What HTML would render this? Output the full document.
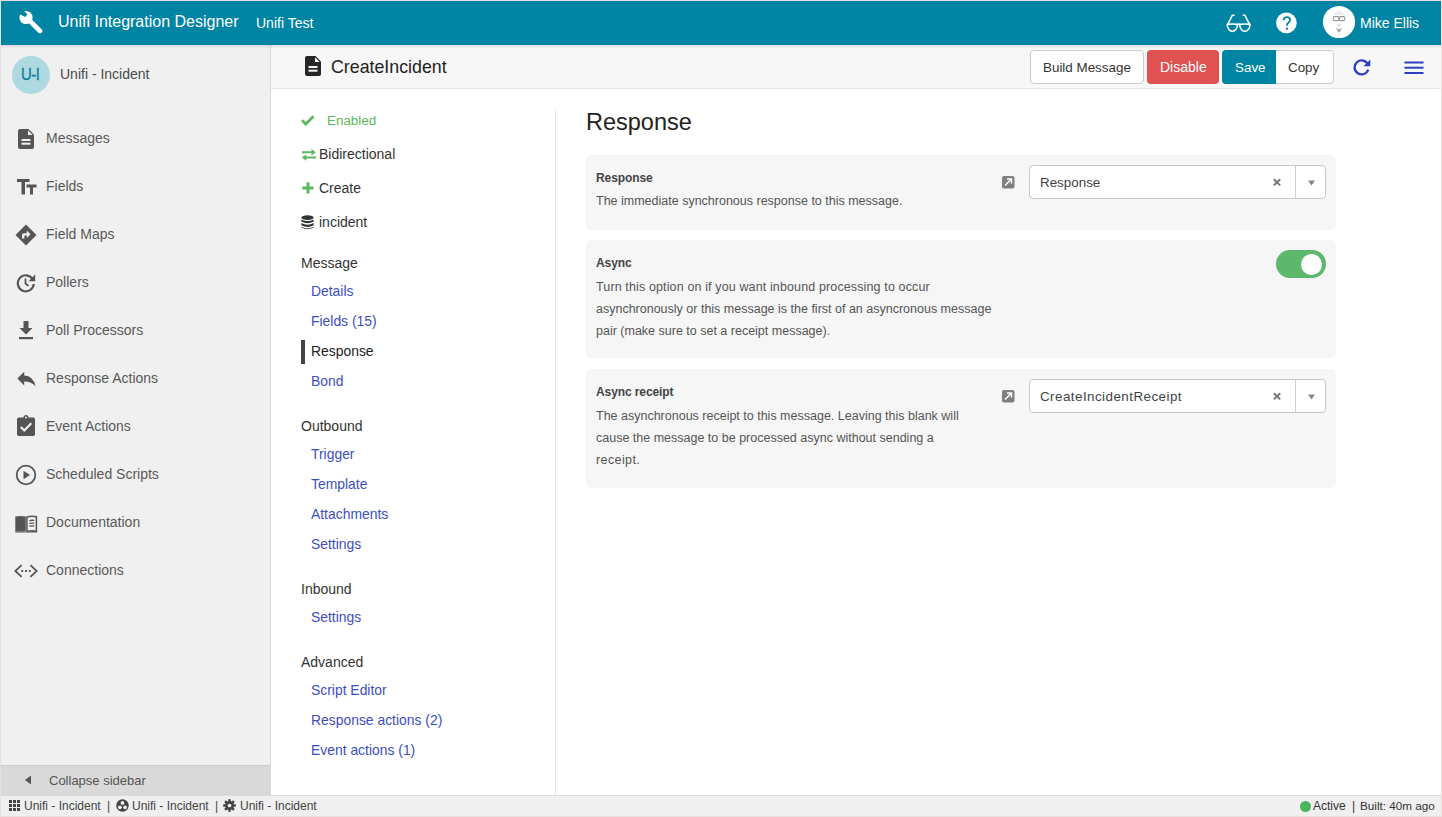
<!DOCTYPE html>
<html><head><meta charset="utf-8">
<style>
*{box-sizing:border-box;margin:0;padding:0}
html,body{width:1442px;height:817px;overflow:hidden;background:#e8e4e2;font-family:"Liberation Sans",sans-serif}
#frame{position:absolute;left:0;top:0;width:1442px;height:817px;background:#fff;overflow:hidden}
.a{position:absolute}
.t{position:absolute;line-height:1;white-space:nowrap}
svg{position:absolute;display:block}
#hdr{position:absolute;left:1px;top:1px;width:1440px;height:44px;background:#0084a4}
#side{position:absolute;left:1px;top:45px;width:270px;height:750px;background:#f0f0f0;border-right:1px solid #dadada}
#bar{position:absolute;left:271px;top:45px;width:1170px;height:44px;background:#f7f7f7;border-bottom:1px solid #e6e6e6}
#foot{position:absolute;left:1px;top:795px;width:1440px;height:21px;background:#efefef;border-top:1px solid #dcdcdc}
.nav{color:#595959;font-size:14px}
.sub{color:#3d4ec2;font-size:13.9px}
.hd{color:#333;font-size:14px}
.card{position:absolute;left:585px;width:750px;background:#f6f6f6;border-radius:5px}
.lbl{color:#444;font-size:12px;font-weight:bold;letter-spacing:-0.1px}
.dsc{color:#555;font-size:12.5px}
.sel{position:absolute;left:1028px;width:297px;height:34px;background:#fff;border:1px solid #c8c8c8;border-radius:4px}
.ft{top:calc(810px - .8465em);font-size:12px;color:#444}
.btn{position:absolute;top:50px;height:34px;border-radius:4px}
</style></head><body>
<div id="frame">
<!-- HEADER -->
<div id="hdr"></div>
  <svg style="left:18px;top:10px" width="25" height="24" viewBox="0 0 25 24">
    <path d="M11 10 L22 21" stroke="#fff" stroke-width="4.6" stroke-linecap="round"/>
    <circle cx="8" cy="7.5" r="6.6" fill="#fff"/>
    <path d="M0.5 3.5 L4.5 -0.5 L9.5 4.5 L7 7 Z" fill="#0084a4"/>
  </svg>
  <div class="t" style="left:58px;top:calc(28px - .8465em);font-size:16px;color:#fff">Unifi Integration Designer</div>
  <div class="t" style="left:256px;top:calc(28px - .8465em);font-size:14px;color:#fff">Unifi Test</div>
  <!-- glasses -->
  <svg style="left:1224px;top:12px" width="28" height="22" viewBox="0 0 28 22">
    <g fill="none" stroke="#fff" stroke-width="1.6" stroke-linejoin="round">
      <path d="M10.6 3.2H8.4L3.6 12.6"/><path d="M18.6 3.2H20.8L25.6 12.6"/>
      <path d="M3.2 12.4Q8.35 11.6 13.5 12.4A5.15 7 0 0 1 3.2 12.4Z"/>
      <path d="M15.7 12.4Q20.85 11.6 26 12.4A5.15 7 0 0 1 15.7 12.4Z"/>
      <path d="M13.5 12.4Q14.6 11.6 15.7 12.4"/>
    </g>
  </svg>
  <!-- question -->
  <svg style="left:1275px;top:12px" width="22" height="22" viewBox="0 0 22 22">
    <circle cx="11.4" cy="10.9" r="10.3" fill="#fff"/>
    <path d="M8.6 8.2Q8.7 5 12 5Q15.1 5 15.1 7.8Q15.1 9.5 13.3 10.7Q11.9 11.6 11.9 13.8" fill="none" stroke="#0084a4" stroke-width="1.75"/>
    <rect x="10.9" y="15.6" width="2" height="2.1" fill="#0084a4"/>
  </svg>
  <!-- avatar -->
  <svg style="left:1322px;top:5px" width="34" height="34" viewBox="0 0 34 34">
    <circle cx="17" cy="17" r="16.1" fill="#fff"/>
    <path d="M11.2 10.3Q17 0.8 22.8 10.3Z" fill="#ececec"/>
    <rect x="11.3" y="11.6" width="5.4" height="4" rx="1" fill="none" stroke="#999" stroke-width="1.1"/>
    <rect x="17.3" y="11.6" width="5.4" height="4" rx="1" fill="none" stroke="#999" stroke-width="1.1"/>
    <path d="M14.8 19.8Q17 19 19.2 19.8L18.2 21H15.8Z" fill="#d0d0d0"/>
    <path d="M13.8 22.8Q17 25.5 20.2 22.8L17.9 27.3H16.1Z" fill="#a8a8a8"/>
    <path d="M16 27.5L17 32L18 27.5Z" fill="#f0f0f0"/>
  </svg>
  <div class="t" style="left:1360px;top:calc(27.5px - .8465em);font-size:14px;color:#fff">Mike Ellis</div>

<!-- SIDEBAR -->
<div id="side"></div>
<div class="a" style="left:12px;top:56px;width:38px;height:38px;border-radius:50%;background:#aed9e1"></div>
<div class="t" style="left:21px;top:calc(80.5px - .8465em);font-size:16px;color:#0f7f9c;letter-spacing:-0.5px;transform:scaleX(0.93);transform-origin:0 0;-webkit-text-stroke:0.3px #0f7f9c">U-I</div>
<div class="t nav" style="left:60px;top:calc(78.5px - .8465em);color:#4a4a4a">Unifi - Incident</div>

<!-- nav icons -->
<svg style="left:18px;top:129px" width="16" height="20" viewBox="0 0 16 20">
  <path d="M2 0H10.5L16 5.5V18A2 2 0 0 1 14 20H2A2 2 0 0 1 0 18V2A2 2 0 0 1 2 0Z" fill="#555"/>
  <path d="M10 1.3L14.7 6H10Z" fill="#f0f0f0"/>
  <rect x="3.5" y="10" width="9" height="2" fill="#f0f0f0"/><rect x="3.5" y="13.7" width="9" height="2" fill="#f0f0f0"/>
</svg>
<div class="t nav" style="left:46px;top:calc(142.5px - .8465em)">Messages</div>

<svg style="left:16.5px;top:178.7px" width="20" height="16" viewBox="0 0 20 16">
  <path d="M0 0H12.5V3H8V15.5H4.5V3H0Z" fill="#555"/>
  <path d="M9.5 5.5H19.5V8.5H16V15.5H13V8.5H9.5Z" fill="#555"/>
</svg>
<div class="t nav" style="left:46px;top:calc(190.5px - .8465em)">Fields</div>

<svg style="left:15px;top:224px" width="22" height="22" viewBox="0 0 22 22">
  <path d="M11 0.5L21.5 11L11 21.5L0.5 11Z" fill="#555"/>
  <path d="M7 14.5V11.2Q7 9.2 9 9.2H11.8V6.6L15.6 10.3L11.8 14V11.6H9.4V14.5Z" fill="#f0f0f0"/>
</svg>
<div class="t nav" style="left:46px;top:calc(238.5px - .8465em)">Field Maps</div>

<svg style="left:16px;top:273px" width="20" height="20" viewBox="0 0 20 20">
  <path d="M16.6 6 A8 8 0 1 0 17.8 11" fill="none" stroke="#555" stroke-width="2.2"/>
  <path d="M19.2 1.5V8.2H12.5Z" fill="#555"/>
  <path d="M9.5 5.5V10.5L12.5 13" fill="none" stroke="#555" stroke-width="1.8"/>
</svg>
<div class="t nav" style="left:46px;top:calc(286.5px - .8465em)">Pollers</div>

<svg style="left:18px;top:321px" width="16" height="19" viewBox="0 0 16 19">
  <path d="M5.5 0H10.5V7H14.5L8 13.5L1.5 7H5.5Z" fill="#555"/>
  <rect x="1" y="16" width="14" height="2.2" fill="#555"/>
</svg>
<div class="t nav" style="left:46px;top:calc(334.5px - .8465em)">Poll Processors</div>

<svg style="left:17px;top:371px" width="19" height="16" viewBox="0 0 19 16">
  <path d="M0.3 7.6L7.2 0.8V4.6Q16.5 5 18.6 15.4Q14.5 10.4 7.2 10.4V14.4Z" fill="#555"/>
</svg>
<div class="t nav" style="left:46px;top:calc(382.5px - .8465em)">Response Actions</div>

<svg style="left:17px;top:415px" width="18" height="21" viewBox="0 0 18 21">
  <rect x="0" y="2.5" width="18" height="18.5" rx="1.8" fill="#555"/>
  <circle cx="9" cy="2.5" r="2.5" fill="#555"/><circle cx="9" cy="2.6" r="1" fill="#f0f0f0"/>
  <path d="M3.8 12L7.3 15.5L14.3 8.3" fill="none" stroke="#f0f0f0" stroke-width="2.2"/>
</svg>
<div class="t nav" style="left:46px;top:calc(430.5px - .8465em)">Event Actions</div>

<svg style="left:15px;top:464px" width="22" height="22" viewBox="0 0 22 22">
  <circle cx="11" cy="11" r="9.3" fill="none" stroke="#555" stroke-width="1.8"/>
  <path d="M8.5 6.8L15 11L8.5 15.2Z" fill="#555"/>
</svg>
<div class="t nav" style="left:46px;top:calc(478.5px - .8465em)">Scheduled Scripts</div>

<svg style="left:15px;top:515px" width="23" height="18" viewBox="0 0 23 18">
  <path d="M0.3 1.6Q5.5 0.2 10.8 1.6V16.8Q5.5 15.6 0.3 16.8Z" fill="#555"/>
  <path d="M11.9 2Q16.8 0.6 21.4 1.8V16.2Q16.8 15.2 11.9 16.4Z" fill="none" stroke="#555" stroke-width="1.5"/>
  <path d="M14.3 5.6Q17 5 19.2 5.4M14.3 8.4Q17 7.8 19.2 8.2M14.3 11.2Q17 10.6 19.2 11" fill="none" stroke="#555" stroke-width="1.3"/>
  <path d="M0.3 16.8Q5.5 15.6 11.3 17.3Q16.8 15.6 22.1 16.8V17.6H0.3Z" fill="#555"/>
</svg>
<div class="t nav" style="left:46px;top:calc(526.5px - .8465em)">Documentation</div>

<svg style="left:14px;top:564px" width="24" height="14" viewBox="0 0 24 14">
  <path d="M7.6 1.2L1.3 7L7.6 12.8M16.4 1.2L22.7 7L16.4 12.8" fill="none" stroke="#555" stroke-width="1.8"/>
  <rect x="7.3" y="6" width="1.9" height="2" fill="#555"/><rect x="11.1" y="6" width="1.9" height="2" fill="#555"/><rect x="14.9" y="6" width="1.9" height="2" fill="#555"/>
</svg>
<div class="t nav" style="left:46px;top:calc(574.5px - .8465em)">Connections</div>

<!-- collapse -->
<div class="a" style="left:1px;top:765px;width:269px;height:30px;background:#d9d9d9;border-top:1px solid #cdcdcd"></div>
<svg style="left:24px;top:775px" width="8" height="10" viewBox="0 0 8 10"><path d="M7 0.5V9.5L1 5Z" fill="#555"/></svg>
<div class="t" style="left:49px;top:calc(785px - .8465em);font-size:13px;color:#555">Collapse sidebar</div>

<!-- CONTENT BAR -->
<div id="bar"></div>
<div class="a" style="left:1px;top:45px;width:1440px;height:4px;background:linear-gradient(rgba(0,0,0,.09),rgba(0,0,0,0))"></div>
<svg style="left:305px;top:56px" width="16" height="20" viewBox="0 0 16 20">
  <path d="M2 0H10.5L16 5.5V18A2 2 0 0 1 14 20H2A2 2 0 0 1 0 18V2A2 2 0 0 1 2 0Z" fill="#262626"/>
  <path d="M10 1.3L14.7 6H10Z" fill="#f7f7f7"/>
  <rect x="3.5" y="10" width="9" height="2" fill="#f7f7f7"/><rect x="3.5" y="13.7" width="9" height="2" fill="#f7f7f7"/>
</svg>
<div class="t" style="left:331px;top:calc(74px - .8465em);font-size:17.8px;color:#222">CreateIncident</div>

<div class="btn" style="left:1030px;width:114px;background:#fff;border:1px solid #cacaca"></div>
<div class="t" style="left:1043px;top:calc(72px - .8465em);font-size:13.4px;color:#333">Build Message</div>
<div class="btn" style="left:1147px;width:72px;background:#e05151"></div>
<div class="t" style="left:1160px;top:calc(72px - .8465em);font-size:14px;color:#fff">Disable</div>
<div class="btn" style="left:1222px;width:112px;background:#fff;border:1px solid #cacaca"></div>
<div class="btn" style="left:1222px;width:54px;background:#0084a4;border-radius:4px 0 0 4px"></div>
<div class="t" style="left:1235px;top:calc(72px - .8465em);font-size:13.4px;color:#fff">Save</div>
<div class="t" style="left:1288px;top:calc(72px - .8465em);font-size:13.4px;color:#333">Copy</div>
<svg style="left:1352px;top:58px" width="20" height="18" viewBox="0 0 20 18">
  <path d="M16 6.5A7 7 0 1 0 16.3 11.5" fill="none" stroke="#2e3fc4" stroke-width="2.3"/>
  <path d="M18.3 1.5V8.3H11.5Z" fill="#2e3fc4"/>
</svg>
<svg style="left:1404px;top:60.5px" width="20" height="14" viewBox="0 0 20 14">
  <rect x="0.5" y="0.5" width="19" height="2" fill="#2e3fc4"/><rect x="0.5" y="5.7" width="19" height="2" fill="#2e3fc4"/><rect x="0.5" y="11" width="19" height="2" fill="#2e3fc4"/>
</svg>

<!-- SUBNAV -->
<div class="a" style="left:1px;top:1px;width:1441px;height:816px">
<svg style="left:300px;top:113.5px" width="14" height="11" viewBox="0 0 14 11">
  <path d="M1 5.3L4.8 9L12.5 1.3" fill="none" stroke="#5cb85c" stroke-width="2.7"/>
</svg>
<div class="t" style="left:326px;top:calc(124px - .8465em);font-size:13.4px;color:#5cb85c">Enabled</div>
<svg style="left:299.5px;top:147.5px" width="16" height="12" viewBox="0 0 16 12">
  <path d="M1 3.2H12M3.5 8.6H15" stroke="#5cb85c" stroke-width="2"/>
  <path d="M10.5 0L14.8 3.2L10.5 6.4Z M5.2 5.4L0.8 8.6L5.2 11.8Z" fill="#5cb85c"/>
</svg>
<div class="t hd" style="left:318px;top:calc(158px - .8465em)">Bidirectional</div>
<svg style="left:300.5px;top:181px" width="12" height="12" viewBox="0 0 12 12">
  <path d="M4.5 0.2H7.5V4.5H11.5V7.5H7.5V11.5H4.5V7.5H0.3V4.5H4.5Z" fill="#5cb85c"/>
</svg>
<div class="t hd" style="left:318px;top:calc(192px - .8465em)">Create</div>
<svg style="left:299.5px;top:213.5px" width="13" height="15" viewBox="0 0 13 15">
  <ellipse cx="6.5" cy="2.6" rx="6.2" ry="2.4" fill="#333"/>
  <path d="M0.3 4.4Q6.5 7.8 12.7 4.4V6.6Q6.5 10 0.3 6.6Z" fill="#333"/>
  <path d="M0.3 8.1Q6.5 11.5 12.7 8.1V10.3Q6.5 13.7 0.3 10.3Z" fill="#333"/>
  <path d="M0.3 11.7Q6.5 15.1 12.7 11.7V12.5Q6.5 15.9 0.3 12.5Z" fill="#333"/>
</svg>
<div class="t hd" style="left:318px;top:calc(226px - .8465em)">incident</div>

<div class="t hd" style="left:300px;top:calc(267px - .8465em)">Message</div>
<div class="t sub" style="left:310px;top:calc(295.5px - .8465em)">Details</div>
<div class="t sub" style="left:310px;top:calc(325.5px - .8465em)">Fields (15)</div>
<div class="a" style="left:300px;top:339px;width:4px;height:24px;background:#444"></div>
<div class="t sub" style="left:310px;top:calc(355.5px - .8465em);color:#222">Response</div>
<div class="t sub" style="left:310px;top:calc(385.5px - .8465em)">Bond</div>

<div class="t hd" style="left:300px;top:calc(429.5px - .8465em)">Outbound</div>
<div class="t sub" style="left:310px;top:calc(458.5px - .8465em)">Trigger</div>
<div class="t sub" style="left:310px;top:calc(488.5px - .8465em)">Template</div>
<div class="t sub" style="left:310px;top:calc(518.5px - .8465em)">Attachments</div>
<div class="t sub" style="left:310px;top:calc(548.5px - .8465em)">Settings</div>

<div class="t hd" style="left:300px;top:calc(592.5px - .8465em)">Inbound</div>
<div class="t sub" style="left:310px;top:calc(621.5px - .8465em)">Settings</div>

<div class="t hd" style="left:300px;top:calc(665.5px - .8465em)">Advanced</div>
<div class="t sub" style="left:310px;top:calc(694.5px - .8465em)">Script Editor</div>
<div class="t sub" style="left:310px;top:calc(724.5px - .8465em)">Response actions (2)</div>
<div class="t sub" style="left:310px;top:calc(754.5px - .8465em)">Event actions (1)</div>

<div class="a" style="left:554px;top:108px;width:1px;height:687px;background:#e6e6e6"></div>

<!-- MAIN -->
<div class="t" style="left:585px;top:calc(130px - .8465em);font-size:23.5px;color:#222">Response</div>

<div class="card" style="top:154px;height:75px"></div>
<div class="t lbl" style="left:595px;top:calc(181.5px - .8465em)">Response</div>
<div class="t dsc" style="left:595px;top:calc(205px - .8465em)">The immediate synchronous response to this message.</div>
<svg style="left:1001px;top:175px" width="13" height="13" viewBox="0 0 13 13">
  <rect x="0" y="0" width="12.5" height="12.5" rx="2" fill="#7f7f7f"/>
  <path d="M3 9.5L9 3.5M5 3H9.5V7.5" fill="none" stroke="#fff" stroke-width="1.5"/>
</svg>
<div class="sel" style="top:164px"></div>
<div class="t" style="left:1039px;top:calc(186.5px - .8465em);font-size:13.4px;color:#444">Response</div>
<svg style="left:1271px;top:177px" width="10" height="9" viewBox="0 0 10 9"><path d="M1.8 1.3L8.2 7.4M8.2 1.3L1.8 7.4" stroke="#777" stroke-width="2"/></svg>
<div class="a" style="left:1294px;top:165px;width:1px;height:32px;background:#cfcfcf"></div>
<svg style="left:1306px;top:179px" width="9" height="6" viewBox="0 0 9 6"><path d="M1 0.5H8L4.5 5.5Z" fill="#888"/></svg>

<div class="card" style="top:239px;height:118px"></div>
<div class="t lbl" style="left:595px;top:calc(266.5px - .8465em)">Async</div>
<div class="t dsc" style="left:595px;top:calc(290.5px - .8465em);letter-spacing:0.13px">Turn this option on if you want inbound processing to occur</div>
<div class="t dsc" style="left:595px;top:calc(312.5px - .8465em)">asynchronously or this message is the first of an asyncronous message</div>
<div class="t dsc" style="left:595px;top:calc(334.5px - .8465em)">pair (make sure to set a receipt message).</div>
<div class="a" style="left:1275px;top:249px;width:50px;height:28px;border-radius:14px;background:#5cb96c"></div>
<div class="a" style="left:1300px;top:253px;width:21px;height:21px;border-radius:50%;background:#fff"></div>

<div class="card" style="top:368px;height:119px"></div>
<div class="t lbl" style="left:595px;top:calc(395.5px - .8465em)">Async receipt</div>
<div class="t dsc" style="left:595px;top:calc(419.5px - .8465em)">The asynchronous receipt to this message. Leaving this blank will</div>
<div class="t dsc" style="left:595px;top:calc(441.5px - .8465em)">cause the message to be processed async without sending a</div>
<div class="t dsc" style="left:595px;top:calc(463.5px - .8465em);letter-spacing:0.4px">receipt.</div>
<svg style="left:1001px;top:389px" width="13" height="13" viewBox="0 0 13 13">
  <rect x="0" y="0" width="12.5" height="12.5" rx="2" fill="#7f7f7f"/>
  <path d="M3 9.5L9 3.5M5 3H9.5V7.5" fill="none" stroke="#fff" stroke-width="1.5"/>
</svg>
<div class="sel" style="top:378px"></div>
<div class="t" style="left:1039px;top:calc(400.5px - .8465em);font-size:13.4px;color:#444;letter-spacing:0.45px">CreateIncidentReceipt</div>
<svg style="left:1271px;top:391px" width="10" height="9" viewBox="0 0 10 9"><path d="M1.8 1.3L8.2 7.4M8.2 1.3L1.8 7.4" stroke="#777" stroke-width="2"/></svg>
<div class="a" style="left:1294px;top:379px;width:1px;height:32px;background:#cfcfcf"></div>
<svg style="left:1306px;top:393px" width="9" height="6" viewBox="0 0 9 6"><path d="M1 0.5H8L4.5 5.5Z" fill="#888"/></svg>

</div>
<!-- FOOTER -->
<div id="foot"></div>
<svg style="left:9px;top:800px" width="11" height="11" viewBox="0 0 11 11">
  <g fill="#444"><rect x="0" y="0" width="3" height="3"/><rect x="4" y="0" width="3" height="3"/><rect x="8" y="0" width="3" height="3"/>
  <rect x="0" y="4" width="3" height="3"/><rect x="4" y="4" width="3" height="3"/><rect x="8" y="4" width="3" height="3"/>
  <rect x="0" y="8" width="3" height="3"/><rect x="4" y="8" width="3" height="3"/><rect x="8" y="8" width="3" height="3"/></g>
</svg>
<div class="t ft" style="left:24px">Unifi - Incident</div>
<div class="t ft" style="left:107px">|</div>
<svg style="left:116px;top:799px" width="13" height="13" viewBox="0 0 13 13">
  <circle cx="6.5" cy="6.5" r="6.2" fill="#444"/>
  <circle cx="6.5" cy="3.9" r="1.9" fill="#efefef"/><circle cx="3.9" cy="8.3" r="1.9" fill="#efefef"/><circle cx="9.1" cy="8.3" r="1.9" fill="#efefef"/>
</svg>
<div class="t ft" style="left:132px">Unifi - Incident</div>
<div class="t ft" style="left:215px">|</div>
<svg style="left:223px;top:799px" width="13" height="13" viewBox="0 0 14 14">
  <g fill="#444"><circle cx="7" cy="7" r="4.8"/>
  <rect x="5.7" y="0.2" width="2.6" height="13.6"/><rect x="0.2" y="5.7" width="13.6" height="2.6"/>
  <rect x="5.7" y="0.2" width="2.6" height="13.6" transform="rotate(45 7 7)"/><rect x="0.2" y="5.7" width="13.6" height="2.6" transform="rotate(45 7 7)"/></g>
  <circle cx="7" cy="7" r="2" fill="#efefef"/>
</svg>
<div class="t ft" style="left:240px">Unifi - Incident</div>

<div class="a" style="left:1300px;top:801px;width:11px;height:11px;border-radius:50%;background:#4cb55b"></div>
<div class="t ft" style="left:1313px;color:#333">Active</div>
<div class="t ft" style="left:1352px;color:#333">|</div>
<div class="t ft" style="left:1360px;color:#333;font-size:11.7px">Built: 40m ago</div>
<div style="position:absolute;left:0;top:0;width:1442px;height:817px;border:1px solid #e6e1de"></div>
</body></html>
